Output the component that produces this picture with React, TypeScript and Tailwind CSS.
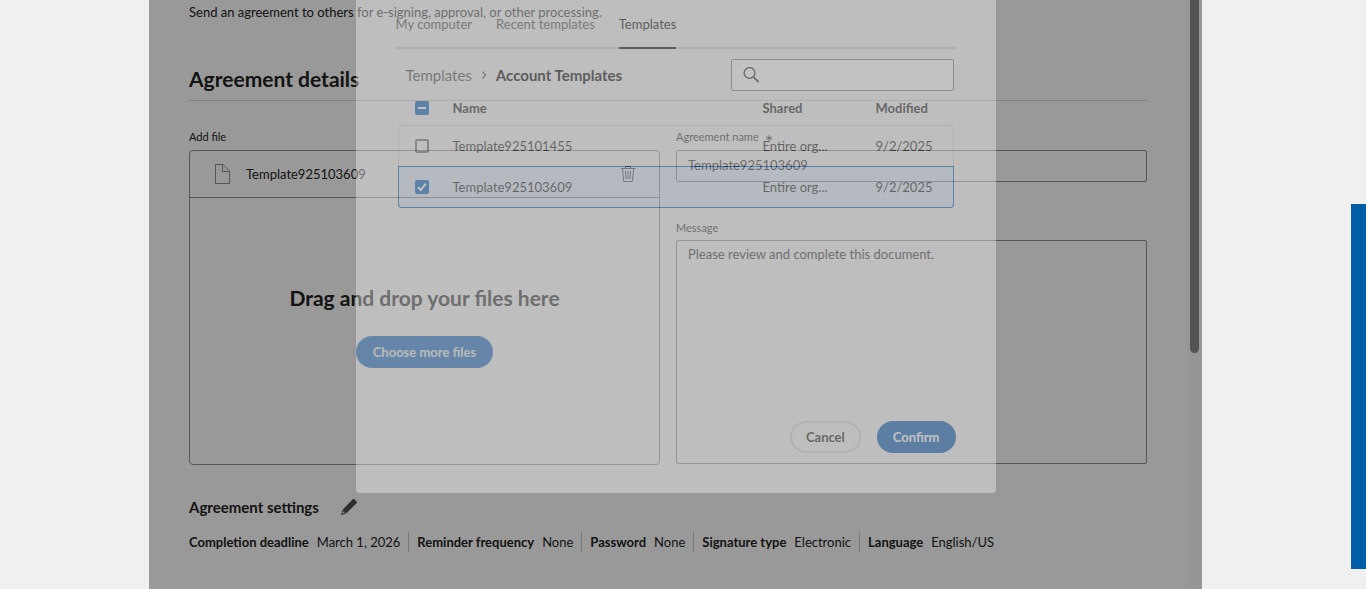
const settings = [
  { label: 'Completion deadline', value: 'March 1, 2026' },
  { label: 'Reminder frequency', value: 'None' },
  { label: 'Password', value: 'None' },
  { label: 'Signature type', value: 'Electronic' },
  { label: 'Language', value: 'English/US' },
]

const templates = [
  { name: 'Template925101455', shared: 'Entire org...', modified: '9/2/2025', selected: false },
  { name: 'Template925103609', shared: 'Entire org...', modified: '9/2/2025', selected: true },
]

const tabs = ['My computer', 'Recent templates', 'Templates']

function FileIcon() {
  return (
    <svg className="w-4 h-5" viewBox="0 0 16 20" fill="none" stroke="#8e8e8e" aria-hidden="true">
      <path d="M1.5 0.5H9L15.5 7V19.5H1.5Z" />
      <path d="M8.5 0.5V7.5H15.5" />
    </svg>
  )
}

function TrashIcon() {
  return (
    <svg className="w-4 h-4" viewBox="0 0 16 16" fill="none" stroke="#4b4b4b" aria-hidden="true">
      <path d="M1 2.5H15.5M5.5 2.5V0.5H10.5V2.5M2.5 2.5L3.7 15.5H12.3L13.8 2.5M5.5 5L6 13M8 5V13M10.5 5L10 13" />
    </svg>
  )
}

function PencilIcon() {
  return (
    <svg className="w-4 h-4" viewBox="0 0 16 16" fill="#4b4b4b" aria-hidden="true">
      <path d="M11.9 0.3a1 1 0 0 1 1.4 0l2.4 2.4a1 1 0 0 1 0 1.4L5.4 14.2 1.8 10.6Z" />
      <path d="M1.8 10.6l3.6 3.6L0.6 15.9a.4.4 0 0 1-.5-.5ZM2.3 12.2L1.2 14.8 3.8 13.7Z" fillRule="evenodd" />
    </svg>
  )
}

function SearchIcon() {
  return (
    <svg className="w-4 h-4" viewBox="0 0 16 16" fill="none" stroke="#222222" strokeWidth="1.3" aria-hidden="true">
      <circle cx="6.5" cy="6" r="5.4" />
      <path d="M10.4 9.9L15.6 15.1" strokeWidth="1.7" />
    </svg>
  )
}

function Checkbox({ label, checked = false, partial = false }: { label: string; checked?: boolean; partial?: boolean }) {
  return (
    <span className="relative block size-3.5">
      <input
        type="checkbox"
        aria-label={label}
        defaultChecked={checked || partial}
        className="block size-3.5 appearance-none rounded-xs border-2 border-[#6e6e6e] checked:border-[#0560c0] checked:bg-[#0560c0]"
      />
      {(checked || partial) && (
        <svg className="absolute inset-0 size-3.5 pointer-events-none" viewBox="0 0 14 14" fill="none" stroke="#ffffff" strokeWidth="2" aria-hidden="true">
          <path d={partial ? 'M3 7H11' : 'M3 7.2L5.8 10L10.8 3.6'} />
        </svg>
      )}
    </span>
  )
}

function AgreementForm() {
  return (
    <main className="flex-1 min-w-0 px-10 pt-0.5">
      <p>Send an agreement to others for e-signing, approval, or other processing.</p>
      <h2 className="mt-[43px] pb-[7px] border-b border-[#d3d3d3] text-[21px] leading-7 font-bold">Agreement details</h2>

      <div className="mt-7 grid grid-cols-2 gap-4">
        <section>
          <h3 className="mb-[5px] text-[11px] leading-4">Add file</h3>
          <div className="flex flex-col h-[315px] rounded border border-[#8e8e8e]">
            <div className="flex items-center h-[47px] pl-6 pr-[23px] border-b border-[#8e8e8e]">
              <FileIcon />
              <span className="ml-4">Template925103609</span>
              <button type="button" aria-label="Remove file" className="ml-auto">
                <TrashIcon />
              </button>
            </div>
            <div className="flex-1 flex flex-col items-center justify-center gap-6 pb-2.5">
              <p className="text-[21px] leading-7 font-bold">Drag and drop your files here</p>
              <button type="button" className="h-8 px-[17px] rounded-full bg-[#0c64c6] text-[#f5f5f5] font-bold">
                Choose more files
              </button>
            </div>
          </div>
        </section>

        <section className="flex flex-col">
          <label htmlFor="agreement-name" className="flex items-start gap-1.5 h-4 mb-[5px] text-[11px] leading-4">
            Agreement name <span className="text-xl leading-6">*</span>
          </label>
          <input
            id="agreement-name"
            defaultValue="Template925103609"
            className="h-8 px-[11px] pb-0.5 rounded-xs border border-[#8e8e8e]"
          />
          <label htmlFor="message" className="mt-[38px] mb-1 text-[11px] leading-4">Message</label>
          <textarea
            id="message"
            defaultValue="Please review and complete this document."
            className="h-56 px-[11px] py-[3px] rounded-xs border border-[#8e8e8e] resize-none"
          />
        </section>
      </div>

      <div className="mt-[30px] flex items-center gap-[22px]">
        <h3 className="text-[15px] leading-6 font-bold">Agreement settings</h3>
        <button type="button" aria-label="Edit agreement settings">
          <PencilIcon />
        </button>
      </div>
      <dl className="mt-[13px] flex items-center">
        {settings.map((s) => (
          <div key={s.label} className="flex gap-2 mr-2 pr-2 border-r border-[#c8c8c8] last:border-0">
            <dt className="font-bold">{s.label}</dt>
            <dd>{s.value}</dd>
          </div>
        ))}
      </dl>
    </main>
  )
}

function TemplatePicker() {
  return (
    <div role="dialog" aria-label="Choose files" className="flex flex-col w-[640px] h-[493px] px-10 pt-3.5 pb-10 rounded-b bg-[#f5f5f5] opacity-40">
      <div role="tablist" className="flex gap-6 border-b-2 border-[#d6d6d6]">
        {tabs.map((tab) => (
          <button
            key={tab}
            type="button"
            role="tab"
            aria-selected={tab === 'Templates'}
            className="-mb-0.5 pb-[13px] border-b-2 border-transparent text-[#4b4b4b] aria-selected:border-black aria-selected:text-black"
          >
            {tab}
          </button>
        ))}
      </div>

      <div className="mt-2.5 mx-0.5 flex items-center justify-between">
        <nav className="flex items-center gap-2 pl-2 text-[15px]">
          <a href="#templates" className="text-[#4b4b4b]">Templates</a>
          <svg className="w-2 h-2.5" viewBox="0 0 8 10" fill="none" stroke="#4b4b4b" strokeWidth="1.2" aria-hidden="true">
            <path d="M2.5 1.5L5.5 5L2.5 8.5" />
          </svg>
          <span className="font-bold text-black">Account Templates</span>
        </nav>
        <div className="flex items-center w-[223px] h-8 px-[11px] gap-2 rounded-xs border border-[#808080] bg-white">
          <SearchIcon />
          <input type="search" aria-label="Search templates" className="flex-1 min-w-0 outline-none" />
        </div>
      </div>

      <table className="mx-0.5 table-fixed border-separate border-spacing-0 text-left text-[#1a1a1a]">
        <thead>
          <tr className="h-[34px]">
            <th className="w-[55px] pl-[17px]"><Checkbox label="Select all" partial /></th>
            <th>Name</th>
            <th className="w-[113px]">Shared</th>
            <th className="w-[78px]">Modified</th>
          </tr>
        </thead>
        <tbody>
          {templates.map((t) => {
            const line = t.selected ? 'border-[#0560c0] bg-[#e0ebfa] border-y' : 'border-[#d6d6d6] border-t'
            return (
              <tr key={t.name} className={t.selected ? 'h-[42px]' : 'h-[41px]'}>
                <td className={`${line} pl-4 border-l ${t.selected ? 'rounded-bl' : 'rounded-tl'}`}>
                  <Checkbox label={`Select ${t.name}`} checked={t.selected} />
                </td>
                <td className={line}>{t.name}</td>
                <td className={line}>{t.shared}</td>
                <td className={`${line} border-r ${t.selected ? 'rounded-br' : 'rounded-tr'}`}>{t.modified}</td>
              </tr>
            )
          })}
        </tbody>
      </table>

      <div className="mt-auto flex justify-end gap-4 font-bold">
        <button type="button" className="h-8 px-3.5 rounded-full border-2 border-[#d6d6d6] text-[#1a1a1a]">Cancel</button>
        <button type="button" className="h-8 px-4 rounded-full bg-[#0058b0] text-white">Confirm</button>
      </div>
    </div>
  )
}

export default function App() {
  return (
    <div className="relative min-h-screen flex pl-[149px] pr-[164px] overflow-hidden bg-[#f0f0f0] font-['Lato',sans-serif] text-[13px] leading-5 text-[#222222]">
      <div className="relative flex-1 min-w-0 flex bg-white overflow-hidden">
        <AgreementForm />
        <div className="w-[15px] bg-[#fbfbfb]">
          <div className="mx-[3px] h-[353px] rounded-b-full bg-[#8b8b8b]" />
        </div>

        <div className="absolute inset-0 bg-black/40" />
        <div className="absolute inset-0 flex justify-center items-start">
          <TemplatePicker />
        </div>
      </div>

      <aside className="absolute right-0 top-[204px] w-[15px] h-[365px] bg-[#005da6]" />
    </div>
  )
}
